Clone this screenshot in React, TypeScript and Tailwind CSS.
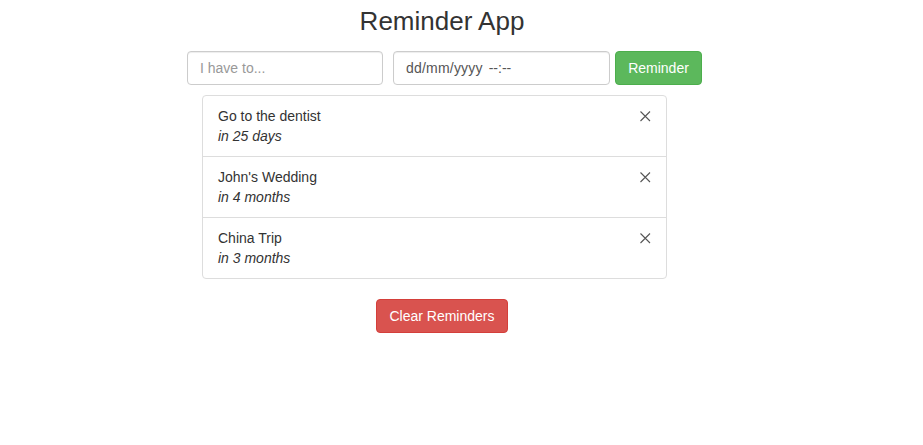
const reminders = [
  { text: "Go to the dentist", due: "in 25 days" },
  { text: "John's Wedding", due: "in 4 months" },
  { text: "China Trip", due: "in 3 months" },
];

const CloseIcon = () => (
  <svg width="12" height="12" viewBox="0 0 12 12" fill="none">
    <path d="M1.5 1.5L11 11M11 1.5L1.5 11" stroke="#555" strokeWidth="1.1" />
  </svg>
);

export default function App() {
  return (
    <div
      className="w-[884px] flex flex-col items-center bg-white text-[14px] text-[#333] leading-[20px]"
      style={{ fontFamily: '"Liberation Sans", Arial, sans-serif' }}
    >
      <h3 className="mt-[6px] text-[26px] leading-[30px] font-normal text-[#333]">
        Reminder App
      </h3>
      <div className="ml-[5px] mt-[15px] flex items-center">
        <div className="w-[196px] h-[34px] mr-[10px] px-[12px] border border-[#ccc] rounded-[4px] flex items-center text-[#999] shadow-[inset_0_1px_1px_rgba(0,0,0,0.075)]">
          I have to...
        </div>
        <div className="w-[217px] h-[34px] mr-[5px] px-[12px] border border-[#ccc] rounded-[4px] flex items-center text-[#555] shadow-[inset_0_1px_1px_rgba(0,0,0,0.075)] whitespace-pre">
          <span className="tracking-[0.2px]">dd/mm/yyyy</span>
          <span className="ml-[6px]">--:--</span>
        </div>
        <button className="w-[87px] h-[34px] bg-[#5cb85c] border border-[#4cae4c] rounded-[4px] text-white">
          Reminder
        </button>
      </div>
      <ul className="w-[465px] mt-[10px] mr-[15px] border border-[#ddd] rounded-[4px]">
        {reminders.map((r, i) => (
          <li
            key={r.text}
            className={
              "flex justify-between items-start px-[15px] py-[10px] " +
              (i > 0 ? "border-t border-[#ddd]" : "")
            }
          >
            <div>
              <div>{r.text}</div>
              <div className="italic">{r.due}</div>
            </div>
            <div className="mt-[4px]">
              <CloseIcon />
            </div>
          </li>
        ))}
      </ul>
      <button className="mt-[20px] w-[132px] h-[34px] bg-[#d9534f] border border-[#d43f3a] rounded-[4px] text-white">
        Clear Reminders
      </button>
    </div>
  );
}
